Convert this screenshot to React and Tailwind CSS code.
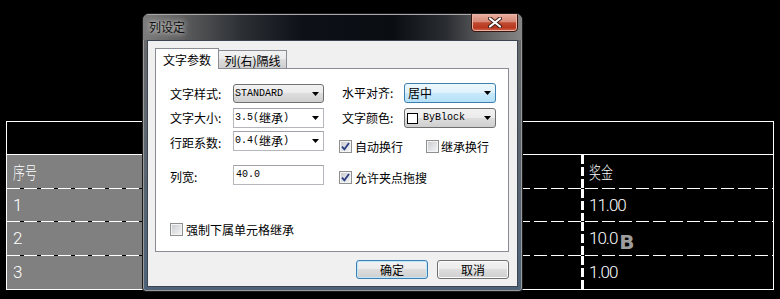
import React from "react";

const cjk = "font-['Noto_Sans_CJK_SC',sans-serif]";
const mono = "font-['Liberation_Mono',monospace]";
const cad = "font-['Roboto','Noto_Sans_CJK_SC',sans-serif] font-light text-white";

function Arrow() {
  return (
    <svg width="7" height="4" viewBox="0 0 7 4" className="shrink-0 ml-auto">
      <path d="M0 0H7L3.5 4Z" fill="#000" />
    </svg>
  );
}

function CheckBox({ checked }) {
  return (
    <span className="w-[13px] h-[13px] shrink-0 border border-[#8e8f8f] bg-[linear-gradient(135deg,#c6c9ce,#f7f7f7)] shadow-[inset_0_0_0_1px_#f4f4f4] flex">
      {checked && (
        <svg width="11" height="11" viewBox="0 0 11 11">
          <path d="M2 5.6L4.4 8.4L9 2" fill="none" stroke="#2b3f82" strokeWidth="1.8" />
        </svg>
      )}
    </span>
  );
}

function CadRow({ left, right, extra }) {
  return (
    <div className="flex h-[33px]">
      <div className="w-[200px] bg-[#808080] flex items-center pl-[6px]">{left}</div>
      <div className="flex-1" />
      <div className="w-[3px] bg-[repeating-linear-gradient(180deg,#fff_0_9px,transparent_9px_12px)]" />
      <div className="w-[189px] flex items-center pl-[5px] relative">{right}{extra}</div>
    </div>
  );
}

function Dash() {
  return (
    <div className="flex h-px">
      <div className="flex-1 bg-[repeating-linear-gradient(90deg,#fff_0_13px,transparent_13px_17px)]" />
    </div>
  );
}

function Num({ children }) {
  return <span className={`${cad} text-[17px] leading-none tracking-[-1px]`}>{children}</span>;
}

function CadCjk({ children }) {
  return (
    <span className={`${cjk} font-light text-white text-[17px] leading-none scale-x-70 origin-left inline-block`}>
      {children}
    </span>
  );
}

export default function App() {
  return (
    <div className="w-[780px] h-[299px] bg-black relative overflow-hidden select-none">
      {/* CAD canvas table */}
      <div className="pt-[121px] pl-[6px]">
        <div className="w-[768px] h-[169px] border border-white flex flex-col">
          <div className="h-[33px] border-b border-white" />
          <CadRow left={<CadCjk>序号</CadCjk>} right={<CadCjk>奖金</CadCjk>} />
          <Dash />
          <CadRow left={<Num>1</Num>} right={<Num>11.00</Num>} />
          <Dash />
          <CadRow
            left={<Num>2</Num>}
            right={<Num>10.0</Num>}
            extra={
              <span className="ml-[2px] text-[20px] leading-none font-bold text-[#9d9d9d] font-['DejaVu_Sans',sans-serif] mt-[6px]">
                B
              </span>
            }
          />
          <Dash />
          <CadRow left={<Num>3</Num>} right={<Num>1.00</Num>} />
        </div>
      </div>

      {/* Dialog window */}
      <div className="absolute left-[142px] top-[13px] w-[381px] h-[279px] rounded-t-[7px] rounded-b-[4px] border border-[#1c1c1c] bg-[linear-gradient(180deg,#6a6a6a_0%,#5b6671_55%,#4e637a_100%)] flex flex-col overflow-hidden shadow-[inset_0_0_0_1px_#9a9a9a]">
        {/* title bar */}
        <div className="h-[26px] shrink-0 flex items-start pl-[6px] pr-[4px] bg-[linear-gradient(90deg,#7c7c7c_0%,#5e5e5e_10%,#2c3035_26%,#0d1117_42%,#0a0d12_66%,#2a2d32_80%,#5f5f5f_90%,#858585_100%)] shadow-[inset_0_1px_0_#a8a8a8]">
          <span className={`${cjk} text-[12px] leading-none text-[#111] mt-[7px] [text-shadow:0_0_4px_#d8d8d8,0_0_8px_#bdbdbd]`}>
            列设定
          </span>
          <div className="ml-auto -mt-px w-[47px] h-[19px] rounded-b-[4px] border border-[#3a1510] bg-[linear-gradient(180deg,#e8b0a0_0%,#d78a77_45%,#c04a30_52%,#b8381f_80%,#d0674e_100%)] flex items-center justify-center shadow-[inset_0_0_0_1px_#eab3a4]">
            <svg width="14" height="11" viewBox="0 0 14 11">
              <path d="M2 1.5L12 9.5M12 1.5L2 9.5" stroke="#3b1a14" strokeWidth="4" strokeLinecap="round" />
              <path d="M2 1.5L12 9.5M12 1.5L2 9.5" stroke="#fff" strokeWidth="2.2" strokeLinecap="round" />
            </svg>
          </div>
        </div>

        {/* client */}
        <div className="flex-1 px-[4px] pb-[4px] flex">
          <div className={`${cjk} flex-1 border border-[#3c4652] bg-[#f0f0f0] pl-[7px] pt-[7px] pr-[8px] flex flex-col text-[12px] leading-none text-black`}>
            {/* tabs */}
            <div className="h-[20px] flex items-end relative z-10 shrink-0">
              <div className="w-[64px] h-[21px] -mb-px border border-b-0 border-[#898c95] bg-white flex items-center justify-center pt-[1px]">
                文字参数
              </div>
              <div className="w-[68px] h-[18px] border border-l-0 border-b-0 border-[#898c95] bg-[linear-gradient(180deg,#f2f2f2_0%,#ebebeb_50%,#dddddd_50%,#cfcfcf_100%)] flex items-center justify-center pt-[2px]">
                列(右)隔线
              </div>
            </div>

            {/* panel */}
            <div className="h-[184px] shrink-0 border border-[#898c95] bg-white pl-[14px] pt-[14px] flex gap-[15px]">
              {/* left column */}
              <div className="w-[154px] flex flex-col pt-[1px]">
                <div className="flex items-center h-[19px]">
                  <span className="w-[63px]">文字样式:</span>
                  <div className="w-[91px] h-[19px] rounded-[3px] border border-[#707070] bg-[linear-gradient(180deg,#f2f2f2_0%,#ebebeb_50%,#dddddd_50%,#cfcfcf_100%)] flex items-center pl-[1px] pr-[4px]">
                    <span className={`${mono} text-[10px]`}>STANDARD</span>
                    <Arrow />
                  </div>
                </div>
                <div className="flex items-center h-[20px] mt-[5px]">
                  <span className="w-[63px]">文字大小:</span>
                  <div className="w-[91px] h-[20px] border border-[#b5b7bd] border-t-[#9fa2a8] bg-white flex items-center pl-[1px] pr-[4px]">
                    <span className={`${mono} text-[10px]`}>3.5(</span>
                    <span>继承</span>
                    <span className={`${mono} text-[10px]`}>)</span>
                    <Arrow />
                  </div>
                </div>
                <div className="flex items-center h-[20px] mt-[3px]">
                  <span className="w-[63px] pt-[3px]">行距系数:</span>
                  <div className="w-[91px] h-[20px] border border-[#b5b7bd] border-t-[#9fa2a8] bg-white flex items-center pl-[1px] pr-[4px]">
                    <span className={`${mono} text-[10px]`}>0.4(</span>
                    <span>继承</span>
                    <span className={`${mono} text-[10px]`}>)</span>
                    <Arrow />
                  </div>
                </div>
                <div className="flex items-center h-[20px] mt-[14px]">
                  <span className="w-[63px] pt-[4px]">列宽:</span>
                  <div className="w-[91px] h-[20px] border border-[#b5b7bd] border-t-[#9fa2a8] bg-white flex items-center pl-[2px]">
                    <span className={`${mono} text-[10px]`}>40.0</span>
                  </div>
                </div>
                <div className="flex items-center gap-[3px] mt-[38px] whitespace-nowrap">
                  <CheckBox />
                  <span>强制下属单元格继承</span>
                </div>
              </div>

              {/* right column */}
              <div className="flex flex-col">
                <div className="flex items-center h-[20px]">
                  <span className="w-[65px] pl-[3px]">水平对齐:</span>
                  <div className="w-[92px] h-[20px] rounded-[3px] border border-[#3c7fb1] bg-[linear-gradient(180deg,#eef8fd_0%,#dff1fc_50%,#c8e9fb_50%,#b5e0f7_100%)] flex items-center pl-[3px] pr-[4px]">
                    <span>居中</span>
                    <Arrow />
                  </div>
                </div>
                <div className="flex items-center h-[20px] mt-[5px]">
                  <span className="w-[65px] pl-[3px]">文字颜色:</span>
                  <div className="w-[92px] h-[20px] rounded-[3px] border border-[#707070] bg-[linear-gradient(180deg,#f2f2f2_0%,#ebebeb_50%,#dddddd_50%,#cfcfcf_100%)] flex items-center pl-[2px] pr-[4px]">
                    <span className="w-[11px] h-[11px] border border-black bg-white mr-[5px]" />
                    <span className={`${mono} text-[10px]`}>ByBlock</span>
                    <Arrow />
                  </div>
                </div>
                <div className="flex items-center mt-[12px] h-[13px] whitespace-nowrap">
                  <CheckBox checked />
                  <span className="ml-[3px]">自动换行</span>
                  <span className="ml-[23px] flex items-center">
                    <CheckBox />
                    <span className="ml-[2px]">继承换行</span>
                  </span>
                </div>
                <div className="flex items-center mt-[18px] h-[13px] whitespace-nowrap">
                  <CheckBox checked />
                  <span className="ml-[3px]">允许夹点拖搜</span>
                </div>
              </div>
            </div>

            {/* buttons */}
            <div className="flex justify-end gap-[9px] mt-[8px]">
              <div className="w-[72px] h-[19px] rounded-[3px] border border-[#3c7fb1] bg-[linear-gradient(180deg,#f2f2f2_0%,#ebebeb_50%,#dddddd_50%,#cfcfcf_100%)] shadow-[inset_0_0_0_1px_#bfe6fb] flex items-center justify-center">
                确定
              </div>
              <div className="w-[72px] h-[19px] rounded-[3px] border border-[#707070] bg-[linear-gradient(180deg,#f2f2f2_0%,#ebebeb_50%,#dddddd_50%,#cfcfcf_100%)] shadow-[inset_0_0_0_1px_#fbfbfb] flex items-center justify-center">
                取消
              </div>
            </div>
          </div>
        </div>
      </div>
    </div>
  );
}
